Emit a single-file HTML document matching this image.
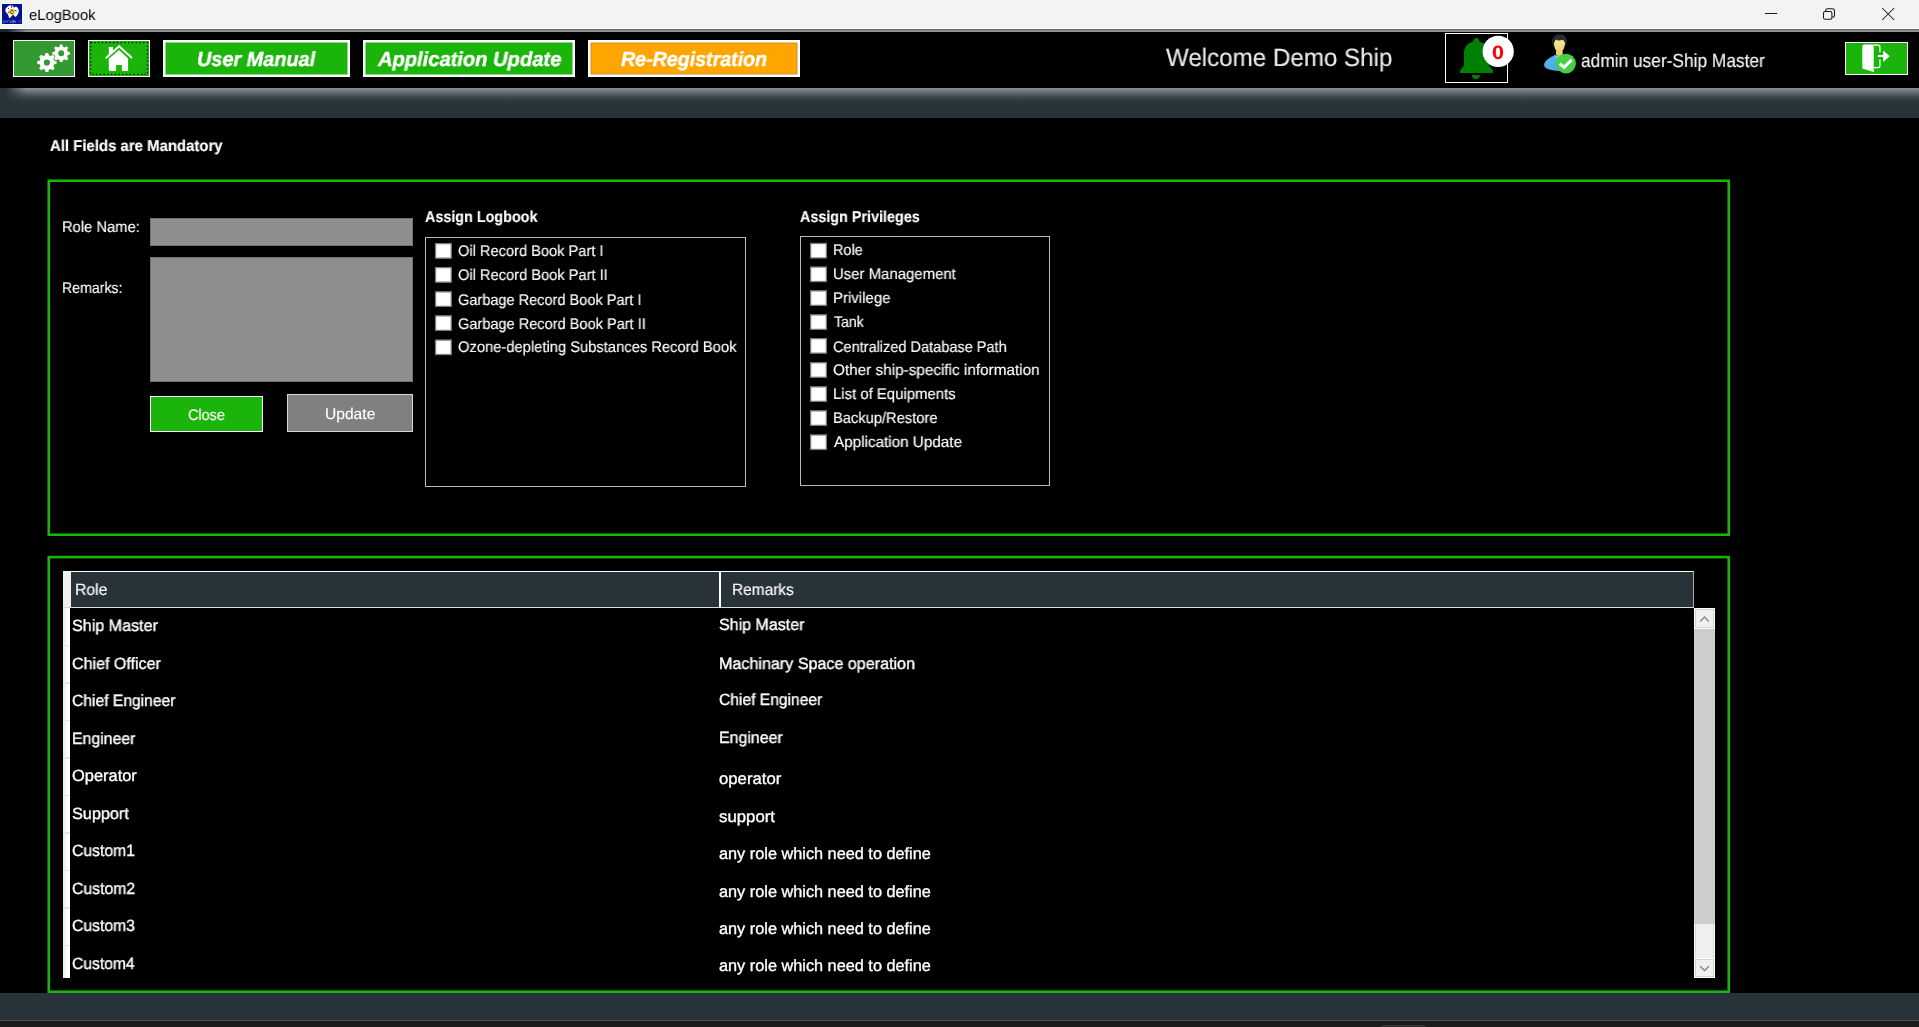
<!DOCTYPE html>
<html lang="en">
<head>
<meta charset="utf-8">
<title>eLogBook</title>
<style>
*{box-sizing:border-box;margin:0;padding:0}
html,body{width:1919px;height:1027px;overflow:hidden;background:#000}
body{position:relative;font-family:"Liberation Sans",sans-serif}
.a{position:absolute}
.t{position:absolute;white-space:nowrap;transform-origin:0 50%;display:block;will-change:transform;text-rendering:geometricPrecision}
.titlebar{left:0;top:0;width:1919px;height:29px;background:linear-gradient(to bottom,#f3f3f3 0,#f3f3f3 27.7px,#fdfdfd 28px,#fefefe 29px)}
.topline{left:0;top:29px;width:1919px;height:3px;background:linear-gradient(to bottom,#5b656b 0,#6f797e 33%,#899195 66%,#90989b 100%)}
.toplinefade{left:0;top:29px;width:27px;height:3px;background:linear-gradient(to right,#17242d 0,#1d2a33 30%,rgba(29,42,51,0) 100%)}
.toolbar{left:0;top:32px;width:1919px;height:56px;background:#000}
.band{left:0;top:88px;width:1919px;height:30px;background:linear-gradient(to bottom,#868e92 0,#7b8387 6%,#626a70 15%,#474f58 26%,#323d45 38%,#2a353c 48%,#273239 60%,#273239 95%,#2c3a44 100%)}
.bandfade{left:0;top:88px;width:26px;height:18px;background:linear-gradient(to right,#273239 0,#273239 20%,rgba(39,50,57,0) 100%)}
.btn{border:1px solid #fff}
.panel{border:2.5px solid #1bb40b}
.inp{background:#8e8e8e;border:1.5px solid #727272}
.box{border:1px solid #b9b9b9}
.cb{position:absolute;width:16.5px;height:16.5px;background:#fff;border:1px solid #8a8a8a;box-shadow:inset 0 0 0 0.5px #e6e6e6}
</style>
</head>
<body>
<!-- window chrome -->
<div class="a titlebar"></div>
<svg class="a" style="left:0;top:2px" width="26" height="24" viewBox="0 2 26 24">
  <rect x="1.2" y="3.2" width="21.6" height="21.5" fill="#fafaf0"/>
  <rect x="2" y="4" width="20" height="20" fill="#05138f"/>
  <path d="M10.4,5.3 C8,5.8 5.9,7.6 5.3,10 C5.1,11.6 6.6,13 8,14.4 L9.1,17.9 L10,18 L13.1,14.5 L15.2,16.9 L16.4,16.2 C17.9,14.2 19,12.2 18.8,10.5 C18.5,8.3 17.2,6.8 15.6,6.4 L14.6,7.6 L13.4,6.9 L12.9,5.2 Z" fill="#fff"/>
  <path d="M10.6,5.4 L11.3,7.9 L12.2,7.4 L12.6,5.3Z" fill="#05138f" opacity="0.85"/>
  <circle cx="8.4" cy="8.4" r="0.55" fill="#05138f"/>
  <ellipse cx="15.5" cy="10.4" rx="1.1" ry="0.5" fill="#2a3aa8"/>
  <ellipse cx="16.9" cy="11.9" rx="0.8" ry="1.2" fill="#c9cdea"/>
  <circle cx="11.9" cy="11.8" r="3.05" fill="#e3bf1c"/>
  <path d="M14.2,12.4 L16.4,11.2 L15.2,13.6Z" fill="#f6e48a"/>
  <rect x="11.1" y="10.1" width="1.6" height="0.75" fill="#0a1890"/>
  <rect x="11.1" y="13.0" width="1.6" height="0.75" fill="#0a1890"/>
  <rect x="9.9" y="11.5" width="0.75" height="1.3" fill="#0a1890"/>
  <rect x="13.3" y="11.4" width="0.6" height="1.0" fill="#3a4ab0"/>
  <rect x="8.0" y="11.9" width="0.9" height="1.3" fill="#3646ae"/>
  <rect x="11.2" y="11.1" width="1.5" height="1.6" fill="#efd02a"/>
  <path d="M3.4,20.3v2.3h1.4 M5.4,20.4l0.7,1.4l0.8,-1l0.8,1l0.7,-1.4 M10.3,20.3v2.3h1.2 M12.3,20.3h1.2v2.2h-1.2z M14.6,20.3v2.3 M15.4,20.9v1.7 M17.5,22.3h0.5 M20.6,20.3l-1.2,1l1.2,1.2" stroke="#7f8ad4" stroke-width="0.8" fill="none"/>
</svg>
<svg class="a" style="left:1750px;top:0" width="169" height="29" viewBox="1750 0 169 29" fill="none" stroke="#1a1a1a" stroke-width="1.05">
  <path d="M1765,13.5h12.2"/>
  <rect x="1823.5" y="11.5" width="8.4" height="7.8" rx="1.6"/>
  <path d="M1825.7,11.3 V10.4 Q1825.7,8.7 1827.4,8.7 H1832.4 Q1834.5,8.7 1834.5,10.8 V15.4 Q1834.5,17.1 1832.8,17.1 H1832.2"/>
  <path d="M1882.2,8 L1894.2,20 M1894.2,8 L1882.2,20"/>
</svg>
<div class="a topline"></div>
<div class="a toplinefade"></div>
<div class="a toolbar"></div>
<div class="a band"></div>
<div class="a bandfade"></div>

<!-- toolbar buttons -->
<div class="a btn" style="left:13px;top:40px;width:62px;height:37px;background:#339933"></div>
<svg class="a" style="left:0;top:32px" width="160" height="56" viewBox="0 32 160 56">
  <path d="M54.18,60.69 L56.49,61.06 L56.49,63.94 L54.18,64.31 L53.33,66.37 L54.70,68.26 L52.66,70.30 L50.77,68.93 L48.71,69.78 L48.34,72.09 L45.46,72.09 L45.09,69.78 L43.03,68.93 L41.14,70.30 L39.10,68.26 L40.47,66.37 L39.62,64.31 L37.31,63.94 L37.31,61.06 L39.62,60.69 L40.47,58.63 L39.10,56.74 L41.14,54.70 L43.03,56.07 L45.09,55.22 L45.46,52.91 L48.34,52.91 L48.71,55.22 L50.77,56.07 L52.66,54.70 L54.70,56.74 L53.33,58.63Z M43.80,62.50 a3.1,3.1 0 1,0 6.2,0 a3.1,3.1 0 1,0 -6.2,0Z" fill="#fff" fill-rule="evenodd"/>
  <path d="M67.80,51.66 L70.00,51.98 L70.00,54.62 L67.80,54.94 L67.03,56.81 L68.36,58.59 L66.49,60.46 L64.71,59.13 L62.84,59.90 L62.52,62.10 L59.88,62.10 L59.56,59.90 L57.69,59.13 L55.91,60.46 L54.04,58.59 L55.37,56.81 L54.60,54.94 L52.40,54.62 L52.40,51.98 L54.60,51.66 L55.37,49.79 L54.04,48.01 L55.91,46.14 L57.69,47.47 L59.56,46.70 L59.88,44.50 L62.52,44.50 L62.84,46.70 L64.71,47.47 L66.49,46.14 L68.36,48.01 L67.03,49.79Z M58.20,53.30 a3.0,3.0 0 1,0 6.0,0 a3.0,3.0 0 1,0 -6.0,0Z" fill="#fff" fill-rule="evenodd"/>
</svg>
<div class="a btn" style="left:88px;top:40px;width:62px;height:37px;background:#1bb40b"></div>
<svg class="a" style="left:88px;top:40px" width="62" height="37" viewBox="88 40 62 37">
  <rect x="90.6" y="42.6" width="56.8" height="31.8" fill="none" stroke="#000" stroke-width="1.25" stroke-dasharray="1.25 2.5"/>
  <path d="M108.8,47h4.2v4.6l-4.2,3.6z" fill="#fff"/>
  <path d="M105.8,58.3 L119.1,46.3 L132.0,58.0" fill="none" stroke="#fff" stroke-width="1.9" stroke-linejoin="miter"/>
  <path d="M119.0,50.0 L128.1,58.4 V71.1 H121.9 V65 H116.1 V71.1 H109.6 L108.8,70.2 V58.8 Z" fill="#fff"/>
</svg>
<svg class="a" style="left:160px;top:36px" width="650" height="46" viewBox="160 36 650 46">
  <rect x="163" y="40" width="187" height="37" fill="#fff"/><rect x="165.5" y="42.5" width="182" height="32" fill="#1bb40b"/>
  <rect x="363" y="40" width="212" height="37" fill="#fff"/><rect x="365.5" y="42.5" width="207" height="32" fill="#1bb40b"/>
  <rect x="588" y="40" width="212" height="37" fill="#fff"/><rect x="590.5" y="42.5" width="207" height="32" fill="#c8912f"/><rect x="591.4" y="43.4" width="205.2" height="30.2" fill="#ffa500"/>
</svg>

<!-- bell -->
<div class="a" style="left:1445px;top:33px;width:63px;height:50px;border:1.3px solid #fff"></div>
<svg class="a" style="left:1440px;top:32px" width="80" height="56" viewBox="1440 32 80 56">
  <path d="M1473.3,41.6 C1473.3,39.2 1474.8,38 1476.4,38 C1478,38 1479.3,39.2 1479.3,41.6 C1484.6,43.2 1489,46.6 1489,53 V65.6 L1493.1,70.6 V73 H1460 V70.6 L1464,65.6 V53 C1464,46.6 1468,43.2 1473.3,41.6 Z" fill="#008000"/>
  <path d="M1471.7,75 H1480.1 C1479.6,78 1477.8,79.3 1475.9,79.3 C1474,79.3 1472.2,78 1471.7,75 Z" fill="#008000"/>
  <circle cx="1498.2" cy="51.4" r="15.6" fill="#fff"/>
</svg>

<!-- user icon -->
<svg class="a" style="left:1540px;top:32px" width="40" height="56" viewBox="1540 32 40 56">
  <defs>
    <linearGradient id="face" x1="0" y1="0" x2="0" y2="1"><stop offset="0" stop-color="#f8e9a4"/><stop offset="1" stop-color="#ecc964"/></linearGradient>
    <linearGradient id="body" x1="0" y1="0" x2="0" y2="1"><stop offset="0" stop-color="#54b4e6"/><stop offset="1" stop-color="#4aaee4"/></linearGradient>
  </defs>
  <path d="M1544.1,64.6 C1544.6,60.6 1549.6,57.6 1554.6,55.3 L1560.4,55.3 L1562,70.9 C1556.6,71.2 1550.6,70.2 1546,68.2 C1544.6,67.4 1543.9,66.2 1544.1,64.6 Z" fill="url(#body)"/>
  <path d="M1554.6,55.3 L1556.2,57.6 L1558.6,56.2 L1560.2,57.8" stroke="#9fe0e6" stroke-width="0.9" fill="none"/>
  <path d="M1553.9,43 C1553.9,39.6 1556.2,38.2 1559.4,38.2 C1562.6,38.2 1565,39.6 1565,43 C1565,46.6 1563.6,49.4 1562.6,50.6 L1562.8,54.6 C1561.4,56.4 1557.4,56.4 1555.8,54.6 L1556.2,50.6 C1555.2,49.4 1553.9,46.6 1553.9,43 Z" fill="url(#face)"/>
  <path d="M1552.6,44.6 C1551,39.4 1553.8,34.4 1559.4,34.3 C1565,34.2 1568.4,38.8 1566.6,44.6 C1566.2,45.6 1565.6,46 1565.2,45.4 C1565.4,42.4 1564.4,40.6 1562.2,39.8 C1560.2,40.8 1557.6,40.8 1556.4,39.4 C1554.6,40.6 1553.8,42.6 1554,45.4 C1553.4,46 1552.9,45.6 1552.6,44.6 Z" fill="#2b2b2b"/>
  <circle cx="1566" cy="63.6" r="9.9" fill="#45cf45"/>
  <path d="M1559.6,63.6 L1564.1,67.3 L1571.6,59.9" fill="none" stroke="#fff" stroke-width="3.1"/>
</svg>

<!-- logout -->
<div class="a btn" style="left:1845px;top:42px;width:63px;height:33px;background:#1bb40b"></div>
<svg class="a" style="left:1845px;top:42px" width="63" height="33" viewBox="1845 42 63 33">
  <path d="M1864.4,44.4 H1873.7 V72.1 L1862.3,68.6 V46.5 Q1862.3,44.4 1864.4,44.4 Z" fill="#fff"/>
  <path d="M1873.7,45.1 H1878.2 Q1879.9,45.1 1879.9,46.8 V52.3 M1879.9,59.6 V65.9 Q1879.9,67.6 1878.2,67.6 H1873.7" fill="none" stroke="#fff" stroke-width="1.3"/>
  <path d="M1878,55 H1883.2 V50.5 L1889.8,56.2 L1883.2,61.9 V57 H1878 Z" fill="#fff"/>
</svg>

<!-- form panel -->
<svg class="a" style="left:40px;top:170px" width="1700" height="830" viewBox="40 170 1700 830" fill="none" stroke="#1bb40b" stroke-width="2.6">
  <rect x="48.75" y="180.75" width="1680" height="354"/>
  <rect x="48.75" y="557.1" width="1680" height="434.6"/>
</svg>
<div class="a inp" style="left:150px;top:218px;width:263px;height:28px"></div>
<div class="a inp" style="left:150px;top:257px;width:263px;height:125px"></div>
<div class="a" style="left:150px;top:396px;width:113px;height:36px;background:#1bb40b;border:1px solid #fff"></div>
<div class="a" style="left:287px;top:394px;width:126px;height:38px;background:#808080;border:1px solid #d6d6d6"></div>
<div class="a box" style="left:425px;top:237px;width:321px;height:250px"></div>
<div class="a box" style="left:800px;top:236px;width:250px;height:250px"></div>
<svg class="a" style="left:430px;top:238px" width="410" height="220" viewBox="430 238 410 220" fill="#fff" stroke="#7c7c7c" stroke-width="1.3">
<rect x="435.55" y="243.65" width="15.7" height="14.5"/>
<rect x="435.55" y="267.65" width="15.7" height="14.5"/>
<rect x="435.55" y="291.85" width="15.7" height="14.5"/>
<rect x="435.55" y="315.85" width="15.7" height="14.5"/>
<rect x="435.55" y="340.05" width="15.7" height="14.5"/>
<rect x="810.65" y="243.45" width="15.7" height="14.5"/>
<rect x="810.65" y="267.05" width="15.7" height="14.5"/>
<rect x="810.65" y="290.85" width="15.7" height="14.5"/>
<rect x="810.65" y="314.85" width="15.7" height="14.5"/>
<rect x="810.65" y="338.65" width="15.7" height="14.5"/>
<rect x="810.65" y="362.75" width="15.7" height="14.5"/>
<rect x="810.65" y="386.85" width="15.7" height="14.5"/>
<rect x="810.65" y="410.85" width="15.7" height="14.5"/>
<rect x="810.65" y="434.95" width="15.7" height="14.5"/>
</svg>

<!-- grid panel -->
<div class="a" style="left:63px;top:571px;width:1631px;height:37px;background:#273239;border-top:1.2px solid #fff;border-bottom:1.3px solid #dcdcdc;border-right:1px solid #a8a8a8"></div>
<div class="a" style="left:63px;top:571px;width:8px;height:36px;background:#f0f0f0"></div>
<div class="a" style="left:719px;top:571px;width:2px;height:37px;background:#fff"></div>
<div class="a" style="left:63px;top:608px;width:7px;height:370px;background:linear-gradient(to right,#e9e9ee,#fff 70%)"></div>
<div style="position:absolute;left:63px;top:644.9px;width:7px;height:1.2px;background:#e4e4ea"></div>
<div style="position:absolute;left:63px;top:682.4px;width:7px;height:1.2px;background:#e4e4ea"></div>
<div style="position:absolute;left:63px;top:719.9px;width:7px;height:1.2px;background:#e4e4ea"></div>
<div style="position:absolute;left:63px;top:757.4px;width:7px;height:1.2px;background:#e4e4ea"></div>
<div style="position:absolute;left:63px;top:794.9px;width:7px;height:1.2px;background:#e4e4ea"></div>
<div style="position:absolute;left:63px;top:832.4px;width:7px;height:1.2px;background:#e4e4ea"></div>
<div style="position:absolute;left:63px;top:869.9px;width:7px;height:1.2px;background:#e4e4ea"></div>
<div style="position:absolute;left:63px;top:907.4px;width:7px;height:1.2px;background:#e4e4ea"></div>
<div style="position:absolute;left:63px;top:944.9px;width:7px;height:1.2px;background:#e4e4ea"></div>
<!-- scrollbar -->
<div class="a" style="left:1694px;top:608px;width:21px;height:370px;background:#f0f0f0"></div>
<div class="a" style="left:1694px;top:628.5px;width:21px;height:295px;background:#cdcdcd"></div>
<div class="a" style="left:1694px;top:608px;width:21px;height:20.5px;background:#f0f0f0;border:1px solid #fff;box-shadow:inset 0 0 0 1px #d2d2d2"></div>
<div class="a" style="left:1694px;top:957.5px;width:21px;height:20.5px;background:#f0f0f0;border:1px solid #fff;box-shadow:inset 0 0 0 1px #d2d2d2"></div>
<div class="a" style="left:1694px;top:923.5px;width:21px;height:34px;border-left:1px solid #fff;border-right:1px solid #fff;box-shadow:inset 1px 0 0 #d8d8d8,inset -1px 0 0 #d8d8d8"></div>
<svg class="a" style="left:1694px;top:608px" width="21" height="370" viewBox="0 0 21 370" fill="none" stroke="#8b8b8b" stroke-width="1.5">
  <path d="M6.2,13.4 L10.5,9.0 L14.8,13.4"/>
  <path d="M6.2,358.2 L10.5,362.6 L14.8,358.2"/>
</svg>

<!-- bottom strips -->
<div class="a" style="left:0;top:993px;width:1919px;height:27px;background:#283239"></div>
<div class="a" style="left:0;top:1019.6px;width:1919px;height:1.4px;background:#4d5154"></div>
<div class="a" style="left:0;top:1021px;width:1919px;height:6px;background:#1c1c1c"></div>
<div class="a" style="left:1380px;top:1024.6px;width:47px;height:8px;background:#2b2b2b;border:1px solid #3a3a3a;border-radius:4px 4px 0 0"></div>

<!-- text -->
<span class="t" style="left:28.56px;top:6.90px;font-size:15px;line-height:18px;color:#000;transform:scaleX(0.9858);-webkit-text-stroke:0px #000">eLogBook</span>
<span class="t" style="left:196.79px;top:47.20px;font-size:20.5px;line-height:25px;color:#fff;transform:scaleX(0.9694);-webkit-text-stroke:0.4px #fff;font-weight:700;font-style:italic">User Manual</span>
<span class="t" style="left:377.50px;top:47.20px;font-size:20.5px;line-height:25px;color:#fff;transform:scaleX(0.9812);-webkit-text-stroke:0.4px #fff;font-weight:700;font-style:italic">Application Update</span>
<span class="t" style="left:621.01px;top:47.20px;font-size:20.5px;line-height:25px;color:#fff;transform:scaleX(0.9571);-webkit-text-stroke:0.4px #fff;font-weight:700;font-style:italic">Re-Registration</span>
<span class="t" style="left:1166.16px;top:43.04px;font-size:25px;line-height:30px;color:#e9e9e9;transform:scaleX(0.9657);-webkit-text-stroke:0.15px #e9e9e9">Welcome Demo Ship</span>
<span class="t" style="left:1581.32px;top:49.77px;font-size:19px;line-height:23px;color:#f2f2f2;transform:scaleX(0.9116);-webkit-text-stroke:0.15px #f2f2f2">admin user-Ship Master</span>
<span class="t" style="left:1492.06px;top:41.71px;font-size:19.3px;line-height:23px;color:#ff0000;transform:scaleX(1.1135);-webkit-text-stroke:0.15px #ff0000;font-weight:700">0</span>
<span class="t" style="left:49.78px;top:136.88px;font-size:15.8px;line-height:19px;color:#fff;transform:scaleX(0.9451);-webkit-text-stroke:0.15px #fff;font-weight:700">All Fields are Mandatory</span>
<span class="t" style="left:61.55px;top:218.96px;font-size:15.4px;line-height:18px;color:#fff;transform:scaleX(0.9575);-webkit-text-stroke:0.15px #fff">Role Name:</span>
<span class="t" style="left:61.95px;top:280.21px;font-size:15.4px;line-height:18px;color:#fff;transform:scaleX(0.9186);-webkit-text-stroke:0.15px #fff">Remarks:</span>
<span class="t" style="left:187.70px;top:406.71px;font-size:15.4px;line-height:18px;color:#fff;transform:scaleX(0.9395);-webkit-text-stroke:0.15px #fff">Close</span>
<span class="t" style="left:324.53px;top:405.66px;font-size:15.4px;line-height:18px;color:#fff;transform:scaleX(1.0136);-webkit-text-stroke:0.15px #fff">Update</span>
<span class="t" style="left:425.15px;top:207.88px;font-size:15.8px;line-height:19px;color:#fff;transform:scaleX(0.9087);-webkit-text-stroke:0.15px #fff;font-weight:700">Assign Logbook</span>
<span class="t" style="left:799.75px;top:208.03px;font-size:15.8px;line-height:19px;color:#fff;transform:scaleX(0.9088);-webkit-text-stroke:0.15px #fff;font-weight:700">Assign Privileges</span>
<span class="t" style="left:458.29px;top:243.36px;font-size:15.4px;line-height:18px;color:#fff;transform:scaleX(0.9503);-webkit-text-stroke:0.15px #fff">Oil Record Book Part I</span>
<span class="t" style="left:458.29px;top:267.36px;font-size:15.4px;line-height:18px;color:#fff;transform:scaleX(0.9520);-webkit-text-stroke:0.15px #fff">Oil Record Book Part II</span>
<span class="t" style="left:458.29px;top:291.66px;font-size:15.4px;line-height:18px;color:#fff;transform:scaleX(0.9448);-webkit-text-stroke:0.15px #fff">Garbage Record Book Part I</span>
<span class="t" style="left:458.29px;top:315.66px;font-size:15.4px;line-height:18px;color:#fff;transform:scaleX(0.9462);-webkit-text-stroke:0.15px #fff">Garbage Record Book Part II</span>
<span class="t" style="left:458.28px;top:338.96px;font-size:15.4px;line-height:18px;color:#fff;transform:scaleX(0.9572);-webkit-text-stroke:0.15px #fff">Ozone-depleting Substances Record Book</span>
<span class="t" style="left:833.02px;top:242.06px;font-size:15.4px;line-height:18px;color:#fff;transform:scaleX(0.9412);-webkit-text-stroke:0.15px #fff">Role</span>
<span class="t" style="left:832.99px;top:266.06px;font-size:15.4px;line-height:18px;color:#fff;transform:scaleX(0.9701);-webkit-text-stroke:0.15px #fff">User Management</span>
<span class="t" style="left:832.98px;top:290.06px;font-size:15.4px;line-height:18px;color:#fff;transform:scaleX(0.9737);-webkit-text-stroke:0.15px #fff">Privilege</span>
<span class="t" style="left:833.97px;top:314.36px;font-size:15.4px;line-height:18px;color:#fff;transform:scaleX(0.9147);-webkit-text-stroke:0.15px #fff">Tank</span>
<span class="t" style="left:833.49px;top:338.96px;font-size:15.4px;line-height:18px;color:#fff;transform:scaleX(0.9443);-webkit-text-stroke:0.15px #fff">Centralized Database Path</span>
<span class="t" style="left:833.45px;top:362.06px;font-size:15.4px;line-height:18px;color:#fff;transform:scaleX(0.9939);-webkit-text-stroke:0.15px #fff">Other ship-specific information</span>
<span class="t" style="left:832.99px;top:386.06px;font-size:15.4px;line-height:18px;color:#fff;transform:scaleX(0.9683);-webkit-text-stroke:0.15px #fff">List of Equipments</span>
<span class="t" style="left:833.01px;top:409.96px;font-size:15.4px;line-height:18px;color:#fff;transform:scaleX(0.9544);-webkit-text-stroke:0.15px #fff">Backup/Restore</span>
<span class="t" style="left:834.20px;top:433.96px;font-size:15.4px;line-height:18px;color:#fff;transform:scaleX(0.9907);-webkit-text-stroke:0.15px #fff">Application Update</span>
<span class="t" style="left:74.64px;top:580.00px;font-size:16.3px;line-height:20px;color:#fff;transform:scaleX(0.9667);-webkit-text-stroke:0.15px #fff">Role</span>
<span class="t" style="left:732.21px;top:580.00px;font-size:16.3px;line-height:20px;color:#fff;transform:scaleX(0.9486);-webkit-text-stroke:0.15px #fff">Remarks</span>
<span class="t" style="left:72.16px;top:616.15px;font-size:16.3px;line-height:20px;color:#fff;transform:scaleX(0.9889);-webkit-text-stroke:0.35px #fff">Ship Master</span>
<span class="t" style="left:72.16px;top:654.05px;font-size:16.3px;line-height:20px;color:#fff;transform:scaleX(0.9849);-webkit-text-stroke:0.35px #fff">Chief Officer</span>
<span class="t" style="left:72.18px;top:691.05px;font-size:16.3px;line-height:20px;color:#fff;transform:scaleX(0.9602);-webkit-text-stroke:0.35px #fff">Chief Engineer</span>
<span class="t" style="left:71.68px;top:729.05px;font-size:16.3px;line-height:20px;color:#fff;transform:scaleX(0.9725);-webkit-text-stroke:0.35px #fff">Engineer</span>
<span class="t" style="left:72.14px;top:766.15px;font-size:16.3px;line-height:20px;color:#fff;transform:scaleX(1.0087);-webkit-text-stroke:0.35px #fff">Operator</span>
<span class="t" style="left:72.15px;top:804.15px;font-size:16.3px;line-height:20px;color:#fff;transform:scaleX(0.9956);-webkit-text-stroke:0.35px #fff">Support</span>
<span class="t" style="left:72.18px;top:841.25px;font-size:16.3px;line-height:20px;color:#fff;transform:scaleX(0.9663);-webkit-text-stroke:0.35px #fff">Custom1</span>
<span class="t" style="left:72.17px;top:878.95px;font-size:16.3px;line-height:20px;color:#fff;transform:scaleX(0.9701);-webkit-text-stroke:0.35px #fff">Custom2</span>
<span class="t" style="left:72.18px;top:916.25px;font-size:16.3px;line-height:20px;color:#fff;transform:scaleX(0.9663);-webkit-text-stroke:0.35px #fff">Custom3</span>
<span class="t" style="left:72.18px;top:953.95px;font-size:16.3px;line-height:20px;color:#fff;transform:scaleX(0.9625);-webkit-text-stroke:0.35px #fff">Custom4</span>
<span class="t" style="left:719.26px;top:615.20px;font-size:16.3px;line-height:20px;color:#fff;transform:scaleX(0.9831);-webkit-text-stroke:0.35px #fff">Ship Master</span>
<span class="t" style="left:718.76px;top:653.65px;font-size:16.3px;line-height:20px;color:#fff;transform:scaleX(0.9888);-webkit-text-stroke:0.35px #fff">Machinary Space operation</span>
<span class="t" style="left:719.28px;top:690.05px;font-size:16.3px;line-height:20px;color:#fff;transform:scaleX(0.9583);-webkit-text-stroke:0.35px #fff">Chief Engineer</span>
<span class="t" style="left:718.78px;top:728.25px;font-size:16.3px;line-height:20px;color:#fff;transform:scaleX(0.9773);-webkit-text-stroke:0.35px #fff">Engineer</span>
<span class="t" style="left:719.23px;top:769.15px;font-size:16.3px;line-height:20px;color:#fff;transform:scaleX(1.0276);-webkit-text-stroke:0.35px #fff">operator</span>
<span class="t" style="left:719.48px;top:806.75px;font-size:16.3px;line-height:20px;color:#fff;transform:scaleX(1.0307);-webkit-text-stroke:0.35px #fff">support</span>
<span class="t" style="left:719.25px;top:844.05px;font-size:16.3px;line-height:20px;color:#fff;transform:scaleX(1.0002);-webkit-text-stroke:0.35px #fff">any role which need to define</span>
<span class="t" style="left:719.25px;top:881.95px;font-size:16.3px;line-height:20px;color:#fff;transform:scaleX(1.0002);-webkit-text-stroke:0.35px #fff">any role which need to define</span>
<span class="t" style="left:719.25px;top:918.95px;font-size:16.3px;line-height:20px;color:#fff;transform:scaleX(1.0002);-webkit-text-stroke:0.35px #fff">any role which need to define</span>
<span class="t" style="left:719.25px;top:956.35px;font-size:16.3px;line-height:20px;color:#fff;transform:scaleX(1.0002);-webkit-text-stroke:0.35px #fff">any role which need to define</span>
</body>
</html>
